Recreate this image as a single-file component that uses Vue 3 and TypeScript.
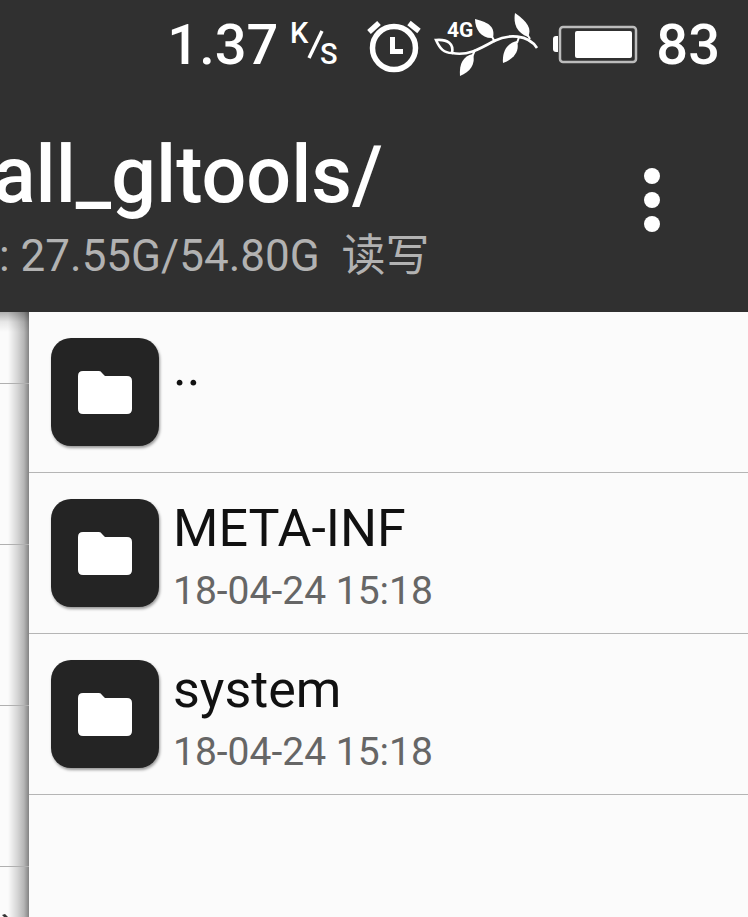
<script setup lang="ts">
interface Entry {
  name: string
  date?: string
}

const entries: Entry[] = [
  { name: '..' },
  { name: 'META-INF', date: '18-04-24 15:18' },
  { name: 'system', date: '18-04-24 15:18' },
]

const previousRows = 4
</script>

<template>
  <div class="screen">
    <header class="top">
      <div class="status">
        <span class="speed">1.37</span>
        <svg class="unit" viewBox="0 0 50 50" role="img" aria-label="K/s">
          <text x="0" y="23" class="unit-text">K</text>
          <path d="M32 11 L19 38" stroke="#fff" stroke-width="3.4" />
          <text x="30" y="44" class="unit-text">S</text>
        </svg>
        <svg class="alarm" viewBox="0 0 52 52" aria-hidden="true">
          <circle cx="26" cy="29" r="21.5" fill="none" stroke="#fff" stroke-width="5.5" />
          <path d="M1 13 L11 4" stroke="#fff" stroke-width="5.5" />
          <path d="M41 4 L51 12" stroke="#fff" stroke-width="5.5" />
          <path d="M22 18 h5 v12 h8 v5 h-13 z" fill="#fff" />
        </svg>
        <svg class="branch" viewBox="0 0 106 66" aria-hidden="true">
          <path d="M18 41 C33 44 44 38 60 29 C74 22 94 22 103 36" fill="none" stroke="#fff" stroke-width="2.6" />
          <path d="M2 28 C14 27 20 32 18 41 C10 41 6 37 2 28 Z" fill="none" stroke="#fff" stroke-width="2.6" />
          <path d="M41 7 C56 11 61 15 59 26 C48 27 41 18 41 7 Z" fill="#fff" />
          <path d="M81 1 C94 10 98 17 94 25 C83 21 79 12 81 1 Z" fill="#fff" />
          <path d="M39 42 C42 52 36 60 26 64 C25 52 29 44 39 42 Z" fill="#fff" />
          <path d="M83 29 C86 39 80 47 69 51 C68 40 73 31 83 29 Z" fill="#fff" />
          <path d="M57 23 L61 30 M93 22 L96 27 M85 25 L83 31 M41 38 L38 45" stroke="#fff" stroke-width="2" />
          <text x="13" y="25" class="network-text">4G</text>
        </svg>
        <svg class="battery" viewBox="0 0 86 40" aria-hidden="true">
          <rect x="8" y="2" width="76" height="35" rx="3" fill="none" stroke="#bcbcbc" stroke-width="2.5" />
          <path d="M6 11 H4 Q1 11 1 14 V24 Q1 27 4 27 H6 Z" fill="#fff" />
          <rect x="23" y="6" width="57" height="27" rx="2" fill="#fff" />
        </svg>
        <span class="percent">83</span>
      </div>
      <div class="toolbar">
        <div class="heading">
          <h1>all_gltools/</h1>
          <p>: 27.55G/54.80G&nbsp; 读写</p>
        </div>
        <button class="more" type="button" aria-label="More options">
          <svg viewBox="0 0 16 64" aria-hidden="true">
            <circle cx="8" cy="8" r="8" />
            <circle cx="8" cy="32" r="8" />
            <circle cx="8" cy="56" r="8" />
          </svg>
        </button>
      </div>
    </header>
    <main class="panes">
      <div class="previous" aria-hidden="true">
        <div v-for="n in previousRows" :key="n" class="previous-row"></div>
        <div class="previous-last">
          <svg viewBox="0 0 8 4"><path d="M2 2 L5 1 L8 4 H4 Z" fill="#333" /></svg>
        </div>
      </div>
      <ul class="files">
        <li v-for="entry in entries" :key="entry.name">
          <a href="#" class="file">
            <span class="tile">
              <svg viewBox="0 0 54 43" aria-hidden="true">
                <path d="M5 0 H21 Q23 0 24 2 L27 5 H49 Q54 5 54 10 V38 Q54 43 49 43 H5 Q0 43 0 38 V5 Q0 0 5 0 Z" fill="#fff" />
              </svg>
            </span>
            <span class="info">
              <span class="name">{{ entry.name }}</span>
              <span v-if="entry.date" class="date">{{ entry.date }}</span>
            </span>
          </a>
        </li>
      </ul>
    </main>
  </div>
</template>

<style>
body {
  margin: 0;
  background: #fbfbfb;
}
</style>

<style scoped>
.screen {
  display: flex;
  flex-direction: column;
  min-height: 100vh;
  overflow: hidden;
  font-family: Roboto, "Noto Sans CJK SC", sans-serif;
}

.top {
  background: #303030;
  color: #fff;
}

.status {
  display: flex;
  align-items: center;
  justify-content: flex-end;
  height: 90px;
  padding-right: 28px;
}

.status svg {
  overflow: visible;
}

.speed,
.percent {
  font-size: 56px;
  font-weight: 500;
  line-height: 64px;
}

.unit {
  width: 50px;
  height: 50px;
  margin-left: 12px;
}

.unit-text {
  font-size: 29px;
  font-weight: 500;
  fill: #fff;
}

.alarm {
  width: 52px;
  height: 52px;
  margin-left: 28px;
}

.branch {
  width: 106px;
  height: 66px;
  margin-left: 14px;
}

.network-text {
  font-size: 21px;
  font-weight: 700;
  fill: #fff;
}

.battery {
  width: 86px;
  height: 40px;
  margin: 0 18px 0 12px;
}

.toolbar {
  display: flex;
  justify-content: space-between;
  height: 222px;
}

.heading {
  margin-left: -7px;
  padding-top: 38px;
  white-space: nowrap;
}

h1 {
  margin: 0;
  font-size: 79px;
  font-weight: 500;
  line-height: 94px;
}

p {
  margin: 4px 0 0;
  padding-left: 6px;
  font-size: 44px;
  line-height: 60px;
  color: #b2b2b2;
}

.more {
  align-self: flex-start;
  display: flex;
  justify-content: center;
  width: 96px;
  margin: 62px 48px 0 0;
  padding: 16px 0;
  border: 0;
  background: none;
}

.more svg {
  width: 16px;
  height: 64px;
  fill: #fff;
}

.panes {
  flex: 1;
  display: flex;
  background: #fbfbfb;
}

.previous {
  display: flex;
  flex-direction: column;
  width: 29px;
  background:
    linear-gradient(to bottom, rgba(0, 0, 0, 0.3), rgba(0, 0, 0, 0.08) 10px, transparent 20px),
    linear-gradient(to right, transparent 8px, rgba(0, 0, 0, 0.16) 18px, rgba(0, 0, 0, 0.28) 24px, rgba(0, 0, 0, 0.48));
}

.previous-row {
  box-sizing: border-box;
  height: 161px;
  border-bottom: 1px solid #b0b0b0;
}

.previous-row:first-child {
  height: 72px;
}

.previous-last {
  flex: 1;
  display: flex;
  align-items: flex-end;
}

.previous-last svg {
  width: 8px;
  height: 4px;
}

.files {
  flex: 1;
  margin: 0;
  padding: 0;
  list-style: none;
}

.files li {
  border-bottom: 1px solid #b5b5b5;
}

.file {
  display: flex;
  gap: 14px;
  padding: 26px 22px 18px;
  min-height: 116px;
  color: #111;
  text-decoration: none;
}

.tile {
  display: flex;
  align-items: center;
  justify-content: center;
  width: 108px;
  height: 108px;
  border-radius: 20px;
  background: #242424;
  box-shadow: 1px 2px 3px rgba(0, 0, 0, 0.4);
}

.tile svg {
  width: 54px;
  height: 43px;
}

.info {
  display: flex;
  flex-direction: column;
  gap: 8px;
}

.name {
  font-size: 52px;
  line-height: 60px;
}

.date {
  font-size: 39px;
  line-height: 48px;
  color: #666;
}
</style>
